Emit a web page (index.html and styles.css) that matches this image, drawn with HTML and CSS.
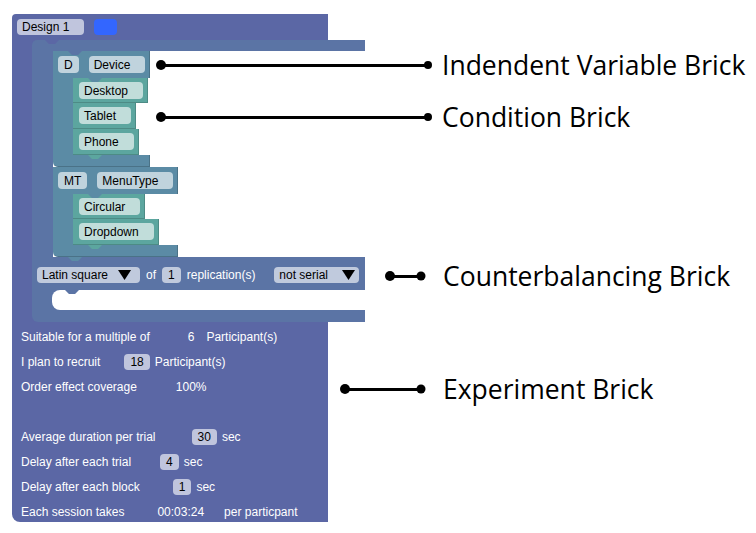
FILE: index.html
```html
<!DOCTYPE html>
<html lang="en">
<head>
  <meta charset="UTF-8">
  <meta name="viewport" content="width=device-width, initial-scale=1.0">
  <title>Experiment Design Bricks</title>
  <link rel="stylesheet" href="styles.css">
</head>
<body>
  <div class="canvas">
    <div class="exp">
      <div class="exp-head">
        <span class="field input name">Design 1</span>
        <span class="swatch"></span>
      </div>
      <div class="exp-body">
        <div class="cb">
          <div class="cb-top"></div>
          <div class="cb-stmt">
            <div class="cb-spine"></div>
            <div class="stack">
              <!-- independent variable: Device -->
              <div class="iv">
                <div class="iv-head under-cb">
                  <span class="field">D</span>
                  <span class="field input">Device</span>
                </div>
                <div class="iv-stmt">
                  <div class="iv-spine"></div>
                  <div class="conds">
                    <div class="cond first"><span class="field input">Desktop</span></div>
                    <div class="cond"><span class="field input">Tablet</span></div>
                    <div class="cond"><span class="field input">Phone</span></div>
                  </div>
                </div>
                <div class="iv-foot"></div>
              </div>
              <!-- independent variable: MenuType -->
              <div class="iv">
                <div class="iv-head">
                  <span class="field">MT</span>
                  <span class="field input">MenuType</span>
                </div>
                <div class="iv-stmt">
                  <div class="iv-spine"></div>
                  <div class="conds">
                    <div class="cond first"><span class="field input">Circular</span></div>
                    <div class="cond"><span class="field input">Dropdown</span></div>
                  </div>
                </div>
                <div class="iv-foot"></div>
              </div>
            </div>
          </div>
          <div class="cb-row">
            <span class="field dd">Latin square<i class="arrow"></i></span>
            <span>of</span>
            <span class="field num">1</span>
            <span>replication(s)</span>
            <span class="field dd serial">not serial<i class="arrow"></i></span>
          </div>
          <div class="cb-slot">
            <div class="slot-hole"></div>
          </div>
          <div class="cb-bottom"></div>
        </div>
      </div>
      <div class="exp-foot">
        <div class="exp-row"><span>Suitable for a multiple of</span><span class="ml-38">6</span><span class="ml-12">Participant(s)</span></div>
        <div class="exp-row"><span>I plan to recruit</span><span class="field num ml-24">18</span><span>Participant(s)</span></div>
        <div class="exp-row"><span>Order effect coverage</span><span class="ml-39">100%</span></div>
        <div class="exp-row"></div>
        <div class="exp-row"><span>Average duration per trial</span><span class="field num ml-36">30</span><span>sec</span></div>
        <div class="exp-row"><span>Delay after each trial</span><span class="field num ml-29">4</span><span>sec</span></div>
        <div class="exp-row"><span>Delay after each block</span><span class="field num ml-33">1</span><span>sec</span></div>
        <div class="exp-row"><span>Each session takes</span><span class="ml-33">00:03:24</span><span class="ml-20">per particpant</span></div>
      </div>
    </div>

    <!-- callouts -->
    <div class="note note-iv"><span class="lead lead-long"></span><span class="note-label">Indendent Variable Brick</span></div>
    <div class="note note-cond"><span class="lead lead-long"></span><span class="note-label">Condition Brick</span></div>
    <div class="note note-cb"><span class="lead lead-short"></span><span class="note-label">Counterbalancing Brick</span></div>
    <div class="note note-exp"><span class="lead lead-mid"></span><span class="note-label">Experiment Brick</span></div>
  </div>
</body>
</html>
```

FILE: styles.css
```css
/* Reset */
* {
  margin: 0;
  padding: 0;
  box-sizing: border-box;
}
body {
  background: #fff;
  font-family: "Liberation Sans", Arial, sans-serif;
  font-size: 12px;
  color: #000;
}
.canvas {
  position: relative;
  width: 756px;
  height: 533px;
  padding: 14px 0 0 12px;
  overflow: hidden;
}

/* fields */
.field {
  display: inline-flex;
  align-items: center;
  height: 17px;
  padding: 0 6px;
  border-radius: 4px;
  background: rgba(255, 255, 255, 0.62);
  color: #000;
  white-space: nowrap;
}
.field.input {
  padding: 0 15px 0 5px;
}
.field.num {
  height: 16px;
  padding: 0 6px;
}
.swatch {
  width: 23px;
  height: 16px;
  border-radius: 4px;
  background: #3366ff;
}

/* notch tab of the block above */
.under-cb::before,
.cond.first::before,
.iv-foot::before,
.cb-top::before,
.cb-row::before,
.slot-hole::before {
  content: '';
  position: absolute;
  top: 0;
  left: 15px;
  width: 14px;
  height: 4px;
  clip-path: polygon(0 0, 100% 0, 72% 100%, 28% 100%);
}

/* experiment brick */
.exp {
  display: flex;
  flex-direction: column;
  align-items: flex-start;
}
.exp-head {
  width: 316px;
  height: 26px;
  padding: 5px;
  display: flex;
  gap: 10px;
  background: #5b67a5;
  border-radius: 4px 0 0 0;
}
.exp-head .field {
  height: 16px;
}
.exp-body {
  display: flex;
  padding-left: 20px;
  background: #5b67a5;
}
.exp-foot {
  width: 316px;
  height: 200px;
  padding: 2px 0 0 9px;
  background: #5b67a5;
  border-radius: 0 0 0 8px;
  color: #fff;
}
.exp-row {
  height: 25px;
  display: flex;
  align-items: center;
  white-space: nowrap;
}
.exp-row > * + * {
  margin-left: 5px;
}
.exp-row > .ml-12 { margin-left: 12px; }
.exp-row > .ml-20 { margin-left: 20px; }
.exp-row > .ml-24 { margin-left: 24px; }
.exp-row > .ml-29 { margin-left: 29px; }
.exp-row > .ml-33 { margin-left: 33px; }
.exp-row > .ml-36 { margin-left: 36px; }
.exp-row > .ml-38 { margin-left: 38px; }
.exp-row > .ml-39 { margin-left: 39px; }

/* counterbalancing brick */
.cb {
  width: 333px;
  display: flex;
  flex-direction: column;
}
.cb-top {
  position: relative;
  height: 11px;
  background: #5b74a5;
  border-radius: 5px 0 0 0;
}
.cb-top::before {
  left: 13px;
  background: #5b67a5;
}
.cb-stmt {
  display: flex;
}
.cb-spine {
  width: 21px;
  background: #5b74a5;
}
.stack {
  flex: 1;
  display: flex;
  flex-direction: column;
  align-items: flex-start;
  background: #fff;
}
.cb-row {
  position: relative;
  height: 33px;
  padding: 3px 6px 0 5px;
  display: flex;
  align-items: center;
  gap: 6px;
  background: #5b74a5;
  color: #fff;
  white-space: nowrap;
}
.cb-row::before {
  left: 36px;
  background: #5b8ba5;
}
.cb-row .field {
  height: 16px;
}
.dd {
  padding: 0 9px 0 5px;
}
.dd .arrow {
  width: 13px;
  height: 10px;
  margin-left: 10px;
  background: #000;
  clip-path: polygon(0 0, 100% 0, 50% 100%);
}
.dd.serial {
  margin-left: auto;
  padding-right: 4px;
}
.dd.serial .arrow {
  margin-left: 14px;
}
.cb-slot {
  height: 20px;
  display: flex;
  padding-left: 20px;
  background: #5b74a5;
}
.slot-hole {
  position: relative;
  flex: 1;
  background: #fff;
  border-radius: 8px 0 0 8px;
}
.slot-hole::before {
  left: 13px;
  background: #5b74a5;
}
.cb-bottom {
  height: 12px;
  background: #5b74a5;
  border-radius: 0 0 0 6px;
}

/* independent variable brick */
.iv {
  display: flex;
  flex-direction: column;
}
.iv-head {
  position: relative;
  height: 27px;
  padding: 5px;
  display: flex;
  gap: 10px;
  background: #5b8ba5;
  box-shadow: inset -1px 0 0 rgba(0, 0, 0, 0.18);
}
.under-cb::before {
  background: #5b74a5;
}
.iv-stmt {
  display: flex;
}
.iv-spine {
  width: 20px;
  background: #5b8ba5;
}
.conds {
  display: flex;
  flex-direction: column;
  align-items: flex-start;
}
.iv-foot {
  position: relative;
  height: 12px;
  background: #5b8ba5;
  border-radius: 0 0 0 5px;
  box-shadow: inset -1px -1px 0 rgba(0, 0, 0, 0.18);
}
.iv-foot::before {
  left: 35px;
  background: #5ca69f;
}

/* condition brick */
.cond {
  position: relative;
  padding: 4px 5px 5px 6px;
  background: #5ca69f;
  box-shadow: inset -1px -1px 0 rgba(0, 0, 0, 0.16);
}
.cond.first {
  padding-bottom: 4px;
}
.cond.first::before {
  background: #5b8ba5;
}

/* callouts */
.note {
  position: absolute;
  display: flex;
  align-items: center;
}
.note-iv { left: 161px; top: 48px; }
.note-cond { left: 161px; top: 100px; }
.note-cb { left: 390px; top: 259px; }
.note-exp { left: 345px; top: 372px; }
.lead {
  position: relative;
  height: 3px;
  background: #000;
}
.lead::before,
.lead::after {
  content: '';
  position: absolute;
  top: 50%;
  border-radius: 50%;
  background: #000;
  transform: translate(-50%, -50%);
}
.lead::before {
  left: 0;
  width: 10px;
  height: 10px;
}
.lead::after {
  left: 100%;
  width: 9px;
  height: 9px;
}
.lead-long { width: 267px; }
.lead-long::after { width: 8px; height: 8px; }
.lead-mid { width: 76px; }
.lead-short { width: 31px; }
.note-label {
  font-family: "Open Sans", "Noto Sans", sans-serif;
  font-size: 26.5px;
  line-height: 34px;
  color: #000;
  white-space: nowrap;
}
.lead-long + .note-label { margin-left: 14px; }
.lead-mid + .note-label,
.lead-short + .note-label { margin-left: 22px; }
```
